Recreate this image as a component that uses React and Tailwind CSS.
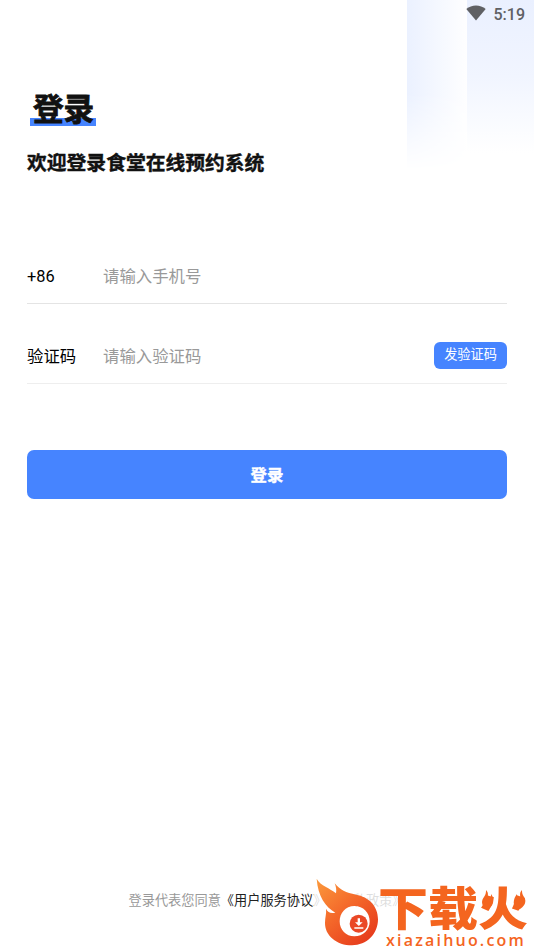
const cjk = "font-['Roboto','Noto_Sans_CJK_SC',sans-serif]";

function StatusBar() {
  return (
    <div className="flex h-[29px] items-center justify-end pr-[9px] text-[#5f6064]">
      <svg width="20" height="16" viewBox="0 0 20 16" fill="currentColor" className="mr-2 -mt-[3px]">
        <path d="M10 15.5 L0.3 4 C5.5 -0.7 14.5 -0.7 19.7 4 Z" />
      </svg>
      <span className="text-[16px] font-medium leading-[29px]">5:19</span>
    </div>
  );
}

function FlameMark() {
  return (
    <svg width="110" height="79" viewBox="0 0 330 237" className="absolute left-0 top-0">
      <defs>
        <linearGradient id="flame" x1="0" y1="0" x2="0.8" y2="1">
          <stop offset="0" stopColor="#fb9a3c" />
          <stop offset="0.5" stopColor="#f4682a" />
          <stop offset="1" stopColor="#e63a1c" />
        </linearGradient>
      </defs>
      <path
        fill="url(#flame)"
        fillRule="evenodd"
        d="M20 26 C32 48 60 54 78 70 C80 60 78 50 74 40 C90 60 108 68 138 74 C176 80 204 108 204 148 C204 192 170 226 126 226 C80 226 44 196 45 158 C45 142 50 130 48 116 C54 128 62 131 76 128 C46 110 24 80 20 26 Z M133 108 C106 108 89 130 89 154 C89 180 108 199 133 199 C160 199 179 180 179 154 C179 128 160 108 133 108 Z"
      />
      <circle cx="146" cy="161" r="27" fill="#ea4826" />
      <path d="M143 145 h7 v12 h8 l-11.500 11 l-11.500 -11 h8 z M133 172 h27 v4 h-27 z" fill="#fff" />
    </svg>
  );
}

// small flames that sit on both dots of 火
function Sparks() {
  return (
    <svg width="45" height="24" viewBox="0 0 45 24" fill="currentColor" className="absolute left-[172px] top-[18px]">
      <path d="M4 2 C8 6 4 9 7 12 C9 10 9 8 9 6 C13 11 12 18 5 22 C-1 18 -1 13 2 9 C4 6 4 4 4 2 Z" />
      <path d="M40 2 C36 6 40 9 37 12 C35 10 35 8 35 6 C31 11 30 18 36 22 C43 19 45 13 42 9 C40 6 40 4 40 2 Z" />
    </svg>
  );
}

function Watermark() {
  return (
    <div className="absolute bottom-0 right-0 h-[79px] w-[224px]">
      <div className="absolute bottom-0 right-0 h-[72px] w-[220px] bg-white/85" />
      <FlameMark />
      <div className="absolute left-[68px] top-[15px] flex w-[156px] flex-col text-[#f4651f]">
        <span className="h-[48px] origin-top scale-y-92 text-[50px] font-black leading-[52px]">下载火</span>
        <span className="pl-[8px] font-['Open_Sans',sans-serif] text-[16px] font-semibold leading-[14px] tracking-[2.2px]">
          xiazaihuo.com
        </span>
      </div>
      <div className="text-[#f4651f]">
        <Sparks />
      </div>
    </div>
  );
}

export default function App() {
  return (
    <div className={`relative flex h-[949px] w-[534px] flex-col overflow-hidden bg-white [text-spacing-trim:space-all] ${cjk}`}>
      <div className="absolute right-0 top-0 flex h-[170px] w-[127px]">
        <div className="h-full w-[60px] bg-linear-to-r from-[#ebf1ff] to-[#fefeff] mask-[linear-gradient(to_bottom,black_55%,transparent)]" />
        <div className="h-full flex-1 bg-linear-to-b from-[#eaf0ff] via-[#f1f5ff] via-45% to-white to-90%" />
      </div>

      <div className="relative flex flex-1 flex-col">
        <StatusBar />

        <div className="flex flex-col px-[27px] pt-[59px] text-[#111]">
          <div className="ml-[3px] flex h-[38px] w-[66px] justify-center bg-[linear-gradient(#4684ff,#4684ff)] bg-[length:100%_8px] bg-bottom bg-no-repeat">
            <h1 className="ml-px text-[30.6px] font-bold leading-[43px] [-webkit-text-stroke:0.8px_#111]">登录</h1>
          </div>
          <h2 className="mt-[23px] text-[19.8px] font-bold leading-[30px] [-webkit-text-stroke:0.4px_#111]">欢迎登录食堂在线预约系统</h2>
        </div>

        <form className="mx-[27px] mt-[69px] flex flex-col text-[16.4px]">
          <div className="flex h-[56px] items-center border-b border-[#e4e4e4]">
            <label className="w-[76px] pt-1 text-black">+86</label>
            <input className="flex-1 pt-1 outline-none placeholder:text-[#999]" placeholder="请输入手机号" />
          </div>
          <div className="mt-[24px] flex h-[56px] items-center border-b border-[#eee]">
            <label className="w-[76px] pt-1 text-black">验证码</label>
            <input className="min-w-0 flex-1 pt-1 outline-none placeholder:text-[#999]" placeholder="请输入验证码" />
            <button type="button" className="mb-px h-[27px] w-[73px] rounded-[6px] bg-[#4684ff] text-[13.2px] text-white">
              发验证码
            </button>
          </div>
          <button
            type="button"
            className="mt-[66px] h-[49px] rounded-[7px] bg-[#4684ff] pt-[3px] text-[16.4px] font-bold text-white [-webkit-text-stroke:0.4px_#fff]"
          >
            登录
          </button>
        </form>

        <p className="mb-[38px] mt-auto text-center text-[13.2px] leading-[20px] text-[#999]">
          登录代表您同意<span className="text-[#222]">《用户服务协议》《隐私政策》</span>
        </p>
      </div>

      <Watermark />
    </div>
  );
}
